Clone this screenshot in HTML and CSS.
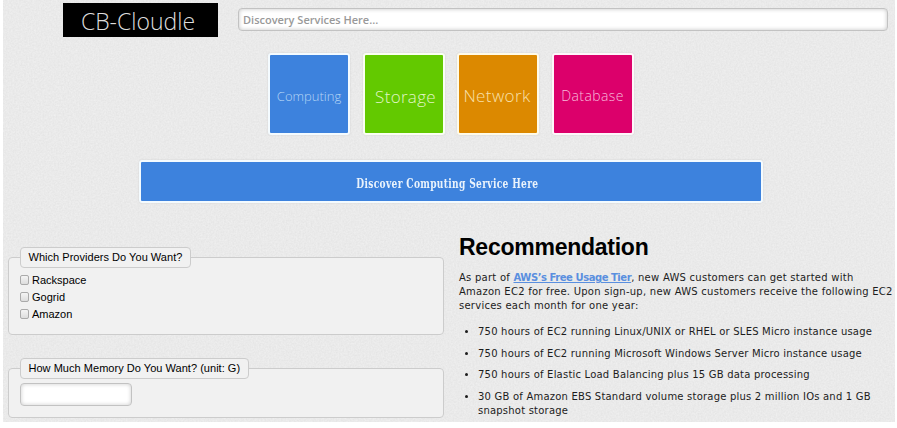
FILE: index.html
```html
<!DOCTYPE html>
<html lang="en">
<head>
    <meta charset="UTF-8">
    <title>CB-Cloudle</title>
    <link rel="stylesheet" href="styles.css">
</head>
<body>
    <div class="page">
        <svg class="texture" aria-hidden="true">
            <filter id="linen" x="0" y="0" width="100%" height="100%" color-interpolation-filters="sRGB">
                <feTurbulence type="fractalNoise" baseFrequency="0.6" numOctaves="2" seed="4"/>
                <feColorMatrix values="0.06 0 0 0 0.887  0.06 0 0 0 0.887  0.06 0 0 0 0.887  0 0 0 0 1"/>
            </filter>
            <rect width="100%" height="100%" filter="url(#linen)"/>
        </svg>

        <header class="header">
            <a class="logo"><span>CB-Cloudle</span></a>
            <input class="search" type="text" placeholder="Discovery Services Here...">
        </header>

        <nav class="tiles">
            <a class="tile computing"><span>Computing</span></a>
            <a class="tile storage"><span>Storage</span></a>
            <a class="tile network"><span>Network</span></a>
            <a class="tile database"><span>Database</span></a>
        </nav>

        <div class="banner"><span>Discover Computing Service Here</span></div>

        <div class="content">
            <form class="filters">
                <fieldset class="providers">
                    <legend>Which Providers Do You Want?</legend>
                    <label><input type="checkbox">Rackspace</label>
                    <label><input type="checkbox">Gogrid</label>
                    <label><input type="checkbox">Amazon</label>
                </fieldset>
                <fieldset class="memory">
                    <legend>How Much Memory Do You Want? (unit: G)</legend>
                    <input class="memory-input" type="text">
                </fieldset>
            </form>

            <section class="recommendation">
                <h1>Recommendation</h1>
                <p>As part of <a href="#">AWS’s Free Usage Tier</a>, new AWS customers can get started with<br>Amazon EC2 for free. Upon sign-up, new AWS customers receive the following EC2<br>services each month for one year:</p>
                <ul>
                    <li>750 hours of EC2 running Linux/UNIX or RHEL or SLES Micro instance usage</li>
                    <li>750 hours of EC2 running Microsoft Windows Server Micro instance usage</li>
                    <li>750 hours of Elastic Load Balancing plus 15 GB data processing</li>
                    <li>30 GB of Amazon EBS Standard volume storage plus 2 million IOs and 1 GB<br>snapshot storage</li>
                </ul>
            </section>
        </div>
    </div>
</body>
</html>
```
FILE: styles.css
```css
* { box-sizing: border-box; }
body { margin: 0; background: #fff; color: #000; font-family: "Liberation Sans", Arial, sans-serif; overflow: hidden; }
.page { position: relative; z-index: 0; height: 422px; margin: 0 2px 0 3px; background: #eaeaea; overflow: hidden; }
.texture { position: absolute; z-index: -1; inset: 0; width: 100%; height: 100%; }

.header { display: flex; align-items: flex-start; padding: 3px 0 0 60px; height: 53px; }
.logo { display: flex; align-items: center; justify-content: center; width: 155px; height: 34px; background: #000; color: #ddd; font: 300 23px "Open Sans", sans-serif; white-space: nowrap; padding: 2px 5px 0 0; }
.search { width: 650px; height: 23px; margin: 5px 0 0 20px; padding: 0 4px; border: 1px solid #c2c2c2; border-radius: 4px; background: #fff; box-shadow: inset 0 0 4px #c4c4c4; font: 600 11px "Open Sans", sans-serif; }
.search::placeholder { color: #999; }

.tiles { display: flex; gap: 12.5px; padding-left: 265px; }
.tile { display: flex; align-items: center; justify-content: center; width: 82px; height: 82px; border: 2px solid #fff; border-radius: 3px; box-shadow: 0 0 2px #ccc; font: 300 14px "Open Sans", sans-serif; white-space: nowrap; padding-top: 4px; }
.computing { background: #3d82dd; color: #b5d5f5; border-color: #f4fbff; font-size: 13px; }
.storage { background: #63c900; color: #e0f6c4; border-color: #fafff2; font-size: 17px; padding-left: 4px; letter-spacing: 0.3px; padding-top: 5px; }
.network { background: #dc8900; color: #f8e0aa; border-color: #fffbe9; font-size: 17px; padding-top: 2px; padding-right: 2px; letter-spacing: 0.4px; }
.database { background: #dc006b; color: #f6bada; border-color: #fff6fa; letter-spacing: 0.4px; padding-top: 2px; }

.banner { display: flex; align-items: center; justify-content: center; width: 624px; height: 43px; margin: 25px 0 0 136px; padding: 5px 7px 0 0; border: 2px solid #f4fbff; border-radius: 3px; background: #3d82dd; box-shadow: 0 0 2px #ccc; color: #eaf3fc; font: bold 12px "DejaVu Serif Condensed", "DejaVu Serif", serif; letter-spacing: 0.4px; white-space: nowrap; }
.banner span { transform: scaleX(0.84); }

.content { display: flex; }
.filters { width: 436px; margin: 44px 15px 0 5px; flex: none; font-size: 11px; }
fieldset { margin: 0; padding: 0 11px; border: 1px solid #ccc; border-radius: 4px; background: #f1f1f1; }
legend { height: 21px; padding: 0 8px 0 7.5px; border: 1px solid #ccc; border-radius: 4px; background: #f1f1f1; line-height: 19px; letter-spacing: 0.03px; white-space: nowrap; }
.providers { height: 88px; margin-bottom: 23px; }
.providers label { display: flex; align-items: center; height: 17px; }
.providers legend + label { margin-top: 3px; }
.providers input { appearance: none; width: 9px; height: 10px; margin: 0 3px 0 0; border: 1px solid #aaa; border-radius: 2px; background: linear-gradient(#f4f4f4, #ddd); }
.memory { height: 60px; }
.memory-input { display: block; width: 112px; height: 23px; margin: 4px 0 0; border: 1px solid #c2c2c2; border-radius: 4px; background: #fff; box-shadow: inset 0 0 4px #ccc; }

.recommendation { padding-top: 31px; font: 10px/14px "DejaVu Sans", Verdana, sans-serif; letter-spacing: 0.21px; color: #1c1c1c; white-space: nowrap; }
.recommendation h1 { margin: 0; color: #000; font: bold 23px/27px "Liberation Sans", Arial, sans-serif; letter-spacing: -0.25px; }
.recommendation p { margin: 10px 0 12px; letter-spacing: 0.25px; }
.recommendation a { color: #5a8fdf; font-weight: bold; letter-spacing: -0.45px; }
.recommendation ul { margin: 0; padding-left: 19px; }
.recommendation li { margin-bottom: 7.6px; }
```
